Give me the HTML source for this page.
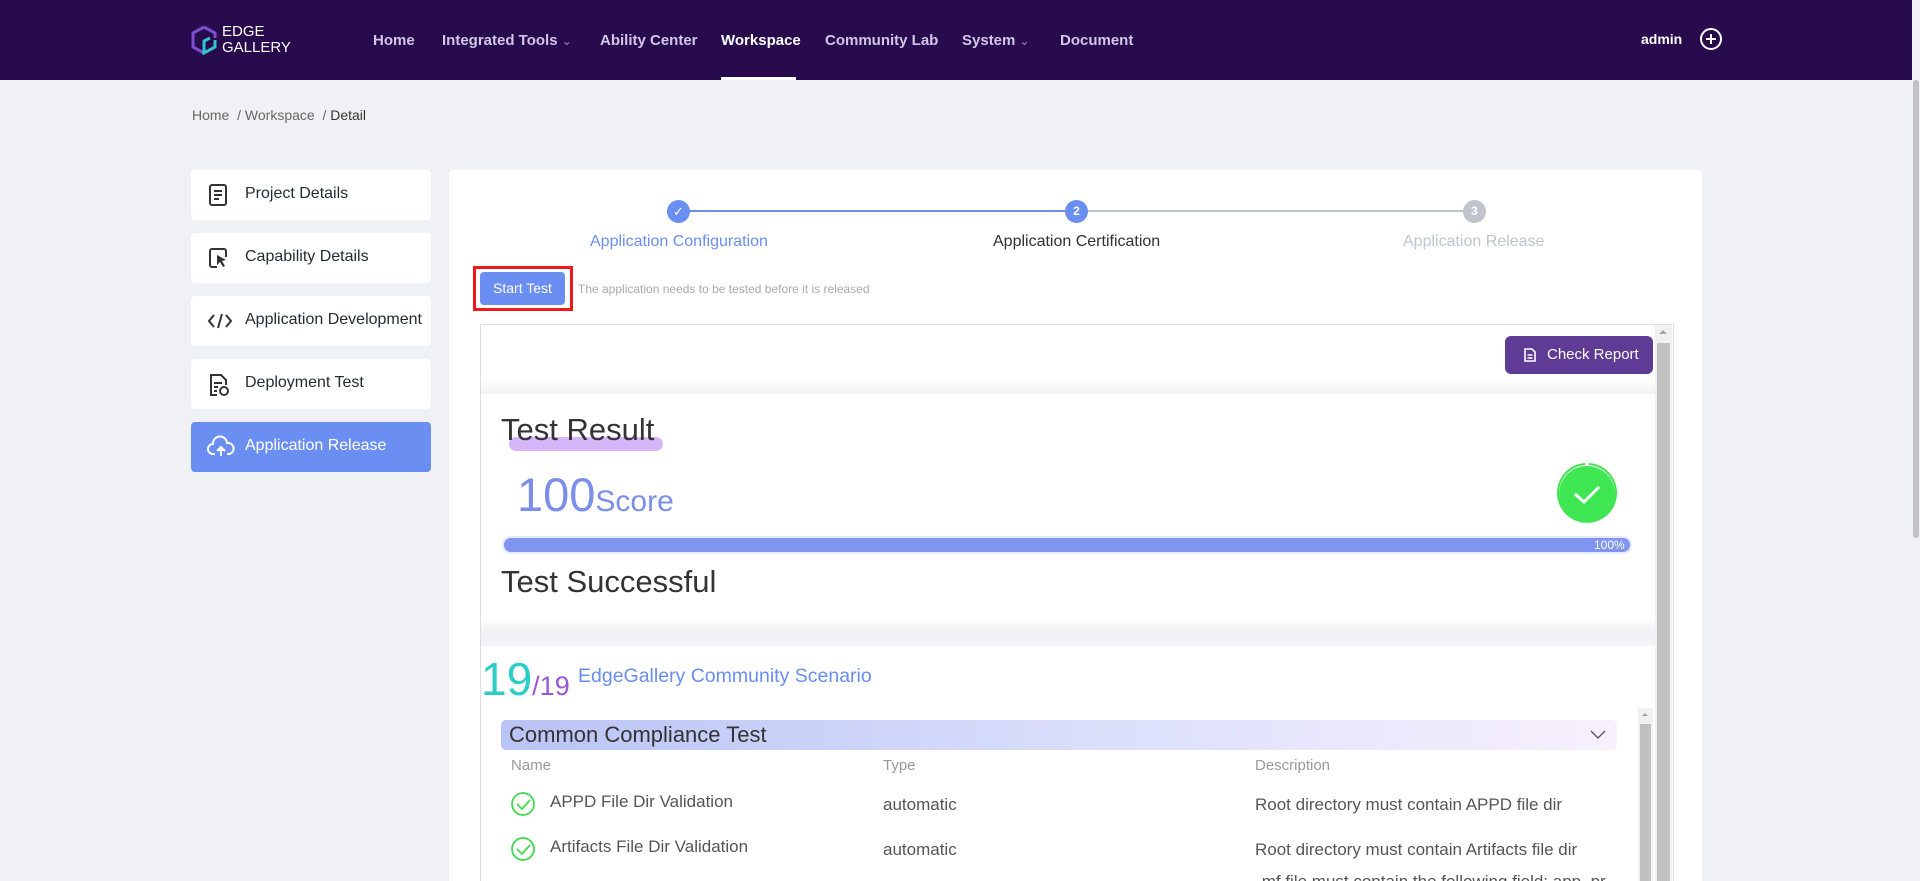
<!DOCTYPE html>
<html><head><meta charset="utf-8"><style>
*{margin:0;padding:0;box-sizing:border-box}
html,body{width:1920px;height:881px;overflow:hidden}
body{background:#f0f1f5;font-family:"Liberation Sans",Arial,sans-serif}
#w{position:relative;width:1920px;height:881px;overflow:hidden}
.a{position:absolute;white-space:nowrap}
.hdr{position:absolute;left:0;top:0;width:1920px;height:80px;background:#280b4d}
.nav{position:absolute;top:32px;font-size:15px;font-weight:bold;color:#cfc6e8}
.side{position:absolute;left:191px;width:240px;height:50px;background:#fff;border-radius:4px;font-size:16px;color:#282b33}
.side span{position:absolute;left:54px;top:15px}
.side svg{position:absolute;left:16px;top:13px}
.lbl{position:absolute;top:233px;font-size:16px}
.th{position:absolute;top:757px;font-size:15px;color:#999}
.td{position:absolute;font-size:17px;color:#555}
</style></head><body><div id="w">
<div class="hdr"></div>
<svg class="a" style="left:191px;top:25px" width="26" height="30" viewBox="0 0 26 30"><path d="M13 2 L24 8 L24 13 M13 2 L2 8 L2 22 L13 28" fill="none" stroke="#7b4fd0" stroke-width="3"/><path d="M24 15 L24 22 L13 28 L13 16 L19 13" fill="none" stroke="#2ec7c9" stroke-width="3"/></svg>
<div class="a" style="left:222px;top:24px;color:#fff;font-size:15px;line-height:16px">EDGE<br>GALLERY</div>
<div class="nav" style="left:373px">Home</div>
<div class="nav" style="left:442px">Integrated Tools <span style="font-weight:normal;font-size:12px;color:#9a8fbf">&#8964;</span></div>
<div class="nav" style="left:600px">Ability Center</div>
<div class="nav" style="left:721px;color:#fff">Workspace</div>
<div class="a" style="left:721px;top:77px;width:75px;height:3px;background:#fff"></div>
<div class="nav" style="left:825px">Community Lab</div>
<div class="nav" style="left:962px">System <span style="font-weight:normal;font-size:12px;color:#9a8fbf">&#8964;</span></div>
<div class="nav" style="left:1060px">Document</div>
<div class="a" style="left:1641px;top:31px;color:#fff;font-size:14px;font-weight:bold">admin</div>
<svg class="a" style="left:1699px;top:27px" width="24" height="24"><circle cx="12" cy="12" r="10" fill="none" stroke="#fff" stroke-width="2"/><path d="M7 12h10M12 7v10" stroke="#fff" stroke-width="2"/></svg>
<div class="a" style="left:192px;top:107px;font-size:14px;color:#666">Home &nbsp;/ Workspace &nbsp;/ <span style="color:#333">Detail</span></div>

<div class="side" style="top:170px"><svg width="22" height="24" viewBox="0 0 22 24"><rect x="3" y="2" width="16" height="20" rx="2" fill="none" stroke="#333" stroke-width="2"/><path d="M7 8h8M7 12h8M7 16h5" stroke="#333" stroke-width="2"/></svg><span>Project Details</span></div>
<div class="side" style="top:233px"><svg width="22" height="24" viewBox="0 0 22 24"><path d="M10 21H5a2 2 0 0 1-2-2V5a2 2 0 0 1 2-2h12a2 2 0 0 1 2 2v6" fill="none" stroke="#333" stroke-width="2"/><path d="M10 9l9 5-4 1 3 5-2 1-3-5-3 3z" fill="#333"/></svg><span>Capability Details</span></div>
<div class="side" style="top:296px"><svg width="26" height="24" viewBox="0 0 26 24"><path d="M7 6L2 12l5 6M19 6l5 6-5 6M15 5l-4 14" fill="none" stroke="#333" stroke-width="2"/></svg><span>Application Development</span></div>
<div class="side" style="top:359px"><svg width="24" height="26" viewBox="0 0 24 26"><path d="M10 23H4V3h10l5 5v5" fill="none" stroke="#333" stroke-width="2"/><path d="M7 11h8M7 15h4M7 19h3" stroke="#333" stroke-width="2"/><circle cx="17" cy="19" r="4" fill="none" stroke="#333" stroke-width="2"/></svg><span>Deployment Test</span></div>
<div class="side" style="top:422px;background:#6b8ef2;color:#fff"><svg width="28" height="24" viewBox="0 0 28 24"><path d="M8 19H6a5 5 0 0 1 0-10 7 7 0 0 1 14-1 5 5 0 0 1 2 11h-2" fill="none" stroke="#fff" stroke-width="2"/><path d="M14 21v-8M10 16l4-4 4 4" fill="#fff" stroke="#fff" stroke-width="2"/></svg><span>Application Release</span></div>

<div class="a" style="left:449px;top:170px;width:1253px;height:711px;background:#fff;border-radius:4px 4px 0 0"></div>
<div class="a" style="left:689px;top:210px;width:387px;height:2px;background:#6b8ef2"></div>
<div class="a" style="left:1087px;top:210px;width:387px;height:2px;background:#c0c4cc"></div>
<div class="a" style="left:667px;top:200px;width:23px;height:23px;border-radius:50%;background:#6b8ef2;color:#fff;font-size:13px;text-align:center;line-height:23px">&#10003;</div>
<div class="a" style="left:1065px;top:200px;width:23px;height:23px;border-radius:50%;background:#6b8ef2;color:#fff;font-size:12px;font-weight:bold;text-align:center;line-height:23px">2</div>
<div class="a" style="left:1463px;top:200px;width:23px;height:23px;border-radius:50%;background:#c0c4cc;color:#fff;font-size:12px;font-weight:bold;text-align:center;line-height:23px">3</div>
<div class="lbl a" style="left:590px;color:#6b8ef2">Application Configuration</div>
<div class="lbl a" style="left:993px;color:#303133">Application Certification</div>
<div class="lbl a" style="left:1403px;color:#c0c4cc">Application Release</div>
<div class="a" style="left:473px;top:266px;width:100px;height:45px;border:3px solid #f01a1a"></div>
<div class="a" style="left:480px;top:272px;width:85px;height:33px;background:#6b8ef2;border-radius:4px;color:#fff;font-size:14px;text-align:center;line-height:33px">Start Test</div>
<div class="a" style="left:578px;top:282px;font-size:12px;color:#aaa">The application needs to be tested before it is released</div>

<div class="a" style="left:480px;top:324px;width:1194px;height:557px;border:1px solid #ddd;border-bottom:0;background:#fff"></div>
<div class="a" style="left:1655px;top:325px;width:17px;height:556px;background:#f1f1f1"></div>
<div class="a" style="left:1657px;top:343px;width:13px;height:538px;background:#c1c1c1"></div>
<div class="a" style="left:1659px;top:330px;width:0;height:0;border:4px solid transparent;border-bottom-color:#a3a3a3;border-top:0"></div>
<div class="a" style="left:1505px;top:336px;width:148px;height:38px;background:#603b96;border-radius:6px;color:#fff;font-size:15px;line-height:38px"><svg style="position:absolute;left:19px;top:12px" width="12" height="14"><path d="M1 1h7l3 3v9H1z" fill="none" stroke="#fff" stroke-width="1.6"/><path d="M3.5 7h5M3.5 10h5" stroke="#fff" stroke-width="1.4"/></svg><span style="position:absolute;left:42px">Check Report</span></div>
<div class="a" style="left:481px;top:380px;width:1174px;height:14px;background:linear-gradient(#fff,#f1f1f6)"></div>
<div class="a" style="left:509px;top:437px;width:154px;height:14px;background:#d5b6f8;border-radius:7px"></div>
<div class="a" style="left:501px;top:412px;font-size:31px;color:#333">Test Result</div>
<div class="a" style="left:517px;top:467px;font-size:47px;color:#7b8fe9">100<span style="font-size:30px">Score</span></div>
<svg class="a" style="left:1555px;top:461px" width="64" height="64"><path d="M30 3 A29 29 0 1 0 34 3" fill="none" stroke="#3fe54f" stroke-width="2"/><circle cx="32" cy="33" r="28" fill="#3fe852"/><path d="M20 33l9 8 15-15" fill="none" stroke="#fff" stroke-width="3"/></svg>
<div class="a" style="left:502px;top:536px;width:1130px;height:18px;border-radius:9px;background:#e5e9fb;padding:2px"><div style="width:100%;height:14px;border-radius:7px;background:#7f95f0"></div></div>
<div class="a" style="left:1594px;top:538px;font-size:12px;color:#fff">100%</div>
<div class="a" style="left:501px;top:564px;font-size:31px;color:#333">Test Successful</div>
<div class="a" style="left:481px;top:618px;width:1174px;height:28px;background:linear-gradient(#fff,#f1f1f5 50%,#f4f4f7)"></div>
<div class="a" style="left:481px;top:652px;font-size:46px;color:#2ccdc6">19<span style="font-size:27px;color:#9a57d6">/19</span></div>
<div class="a" style="left:578px;top:665px;font-size:19.5px;color:#6a8ef0">EdgeGallery Community Scenario</div>
<div class="a" style="left:1638px;top:708px;width:15px;height:173px;background:#f1f1f1"></div>
<div class="a" style="left:1640px;top:724px;width:11px;height:157px;background:#c1c1c1"></div>
<div class="a" style="left:1642px;top:713px;width:0;height:0;border:3px solid transparent;border-bottom-color:#a3a3a3;border-top:0"></div>
<div class="a" style="left:501px;top:720px;width:1116px;height:30px;border-radius:5px;background:linear-gradient(90deg,#b9c4f6,#dfe2fb 60%,#f8f0fd)"></div>
<div class="a" style="left:509px;top:722px;font-size:22px;color:#333">Common Compliance Test</div>
<svg class="a" style="left:1590px;top:730px" width="16" height="10"><path d="M1 1l7 7 7-7" fill="none" stroke="#555" stroke-width="1.3"/></svg>
<div class="th" style="left:511px">Name</div>
<div class="th" style="left:883px">Type</div>
<div class="th" style="left:1255px">Description</div>
<svg class="a" style="left:510px;top:791px" width="26" height="26"><circle cx="13" cy="13" r="11" fill="none" stroke="#3fd94f" stroke-width="1.8"/><path d="M7 13l5 5 8-9" fill="none" stroke="#3fd94f" stroke-width="1.8"/></svg>
<svg class="a" style="left:510px;top:836px" width="26" height="26"><circle cx="13" cy="13" r="11" fill="none" stroke="#3fd94f" stroke-width="1.8"/><path d="M7 13l5 5 8-9" fill="none" stroke="#3fd94f" stroke-width="1.8"/></svg>
<div class="td" style="left:550px;top:792px">APPD File Dir Validation</div>
<div class="td" style="left:883px;top:795px">automatic</div>
<div class="td" style="left:1255px;top:795px">Root directory must contain APPD file dir</div>
<div class="td" style="left:550px;top:837px">Artifacts File Dir Validation</div>
<div class="td" style="left:883px;top:840px">automatic</div>
<div class="td" style="left:1255px;top:840px">Root directory must contain Artifacts file dir</div>
<div class="td" style="left:1257px;top:872px;height:9px;overflow:hidden">.mf file must contain the following field: app_pr</div>
<div class="a" style="left:1912px;top:0;width:8px;height:881px;background:#f0f1f5"></div>
<div class="a" style="left:1913px;top:80px;width:6px;height:458px;background:#c1c1c6;border-radius:3px"></div>
</div></body></html>
